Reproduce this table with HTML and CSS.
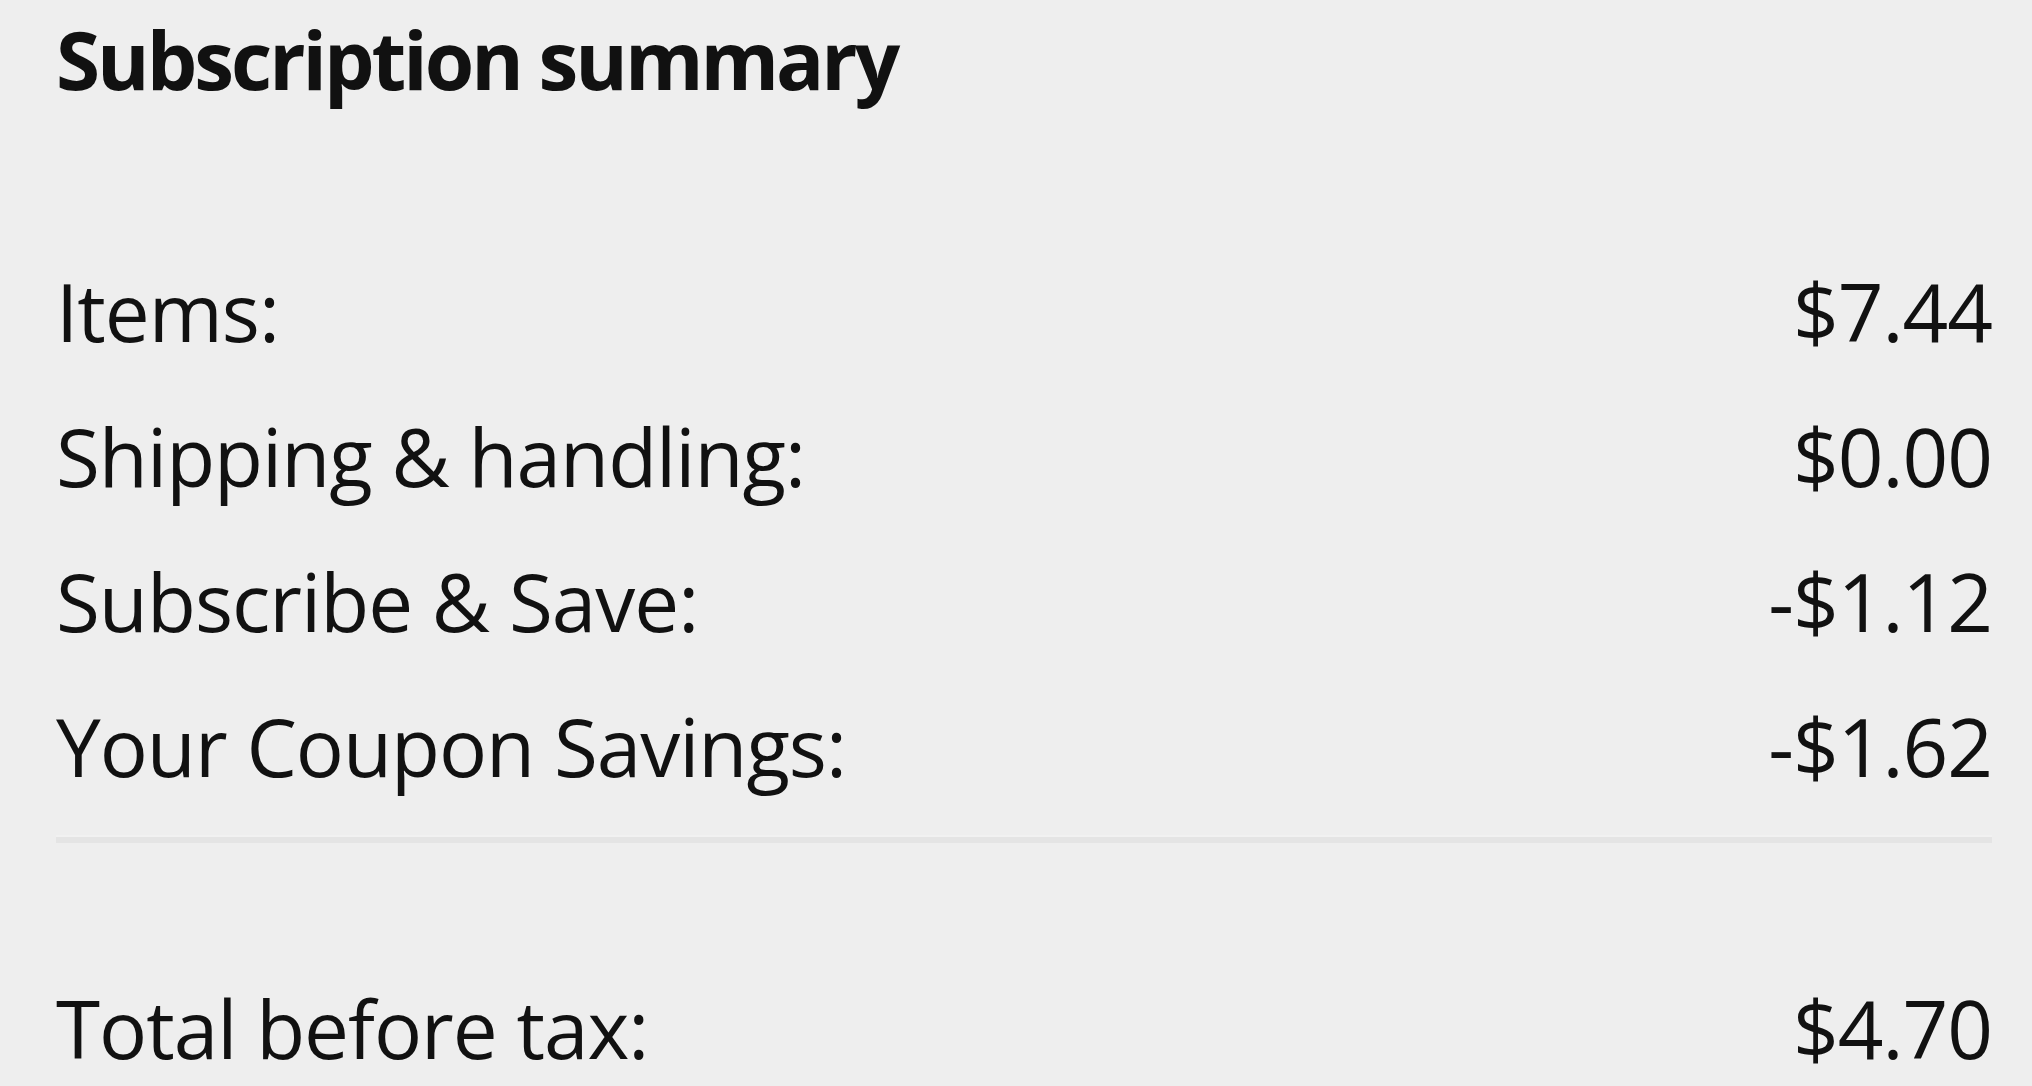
FILE: index.html
```html
<!DOCTYPE html>
<html lang="en">
<head>
<meta charset="utf-8">
<title>Subscription summary</title>
<link rel="stylesheet" href="styles.css">
</head>
<body>
<main class="summary">
  <h1 class="summary-title">Subscription summary</h1>
  <div class="summary-rows">
    <div class="summary-row"><span class="label">Items:</span><span class="value">$7.44</span></div>
    <div class="summary-row"><span class="label">Shipping &amp; handling:</span><span class="value">$0.00</span></div>
    <div class="summary-row"><span class="label">Subscribe &amp; Save:</span><span class="value">-$1.12</span></div>
    <div class="summary-row"><span class="label">Your Coupon Savings:</span><span class="value">-$1.62</span></div>
  </div>
  <hr class="summary-divider">
  <div class="summary-row summary-total"><span class="label">Total before tax:</span><span class="value">$4.70</span></div>
</main>
</body>
</html>
```

FILE: styles.css
```css
html, body {
  margin: 0;
  padding: 0;
  background: #eeeeee;
}

body {
  font-family: "Open Sans", "Noto Sans", sans-serif;
  color: #111111;
  overflow: hidden;
}

.summary {
  padding: 4px 40px 0 56px;
  display: flex;
  flex-direction: column;
}

.summary-title {
  margin: 0;
  font-size: 80px;
  font-weight: 700;
  line-height: 109px;
  letter-spacing: -3px;
}

.summary-rows {
  margin-top: 125px;
  display: flex;
  flex-direction: column;
}

.summary-row {
  display: flex;
  justify-content: space-between;
  align-items: baseline;
  font-size: 80px;
  font-weight: 500;
  line-height: 145px;
  height: 145px;
  letter-spacing: -1px;
}

.value {
  text-align: right;
}

.summary-divider {
  margin: 17px 0 0 0;
  border: 0;
  height: 8px;
  background: #e4e4e4;
  border-top: 2px solid #f1f1f1;
  box-sizing: border-box;
}

.summary-total {
  margin-top: 112px;
}
```
